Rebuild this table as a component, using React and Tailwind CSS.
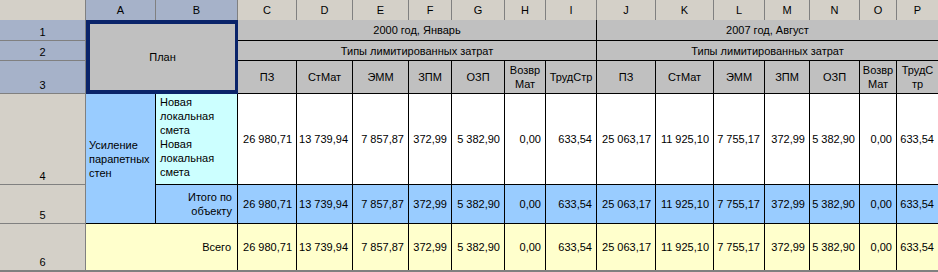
import * as React from "react";

const letters = ["A", "B", "C", "D", "E", "F", "G", "H", "I", "J", "K", "L", "M", "N", "O", "P"];

const kinds = ["ПЗ", "СтМат", "ЭММ", "ЗПМ", "ОЗП", "Возвр Мат", "ТрудСтр"];

const values = [
  "26 980,71",
  "13 739,94",
  "7 857,87",
  "372,99",
  "5 382,90",
  "0,00",
  "633,54",
  "25 063,17",
  "11 925,10",
  "7 755,17",
  "372,99",
  "5 382,90",
  "0,00",
  "633,54",
];

function RowHead({ n, selected, last }) {
  return (
    <div
      className={
        "flex items-end justify-center border-r border-[#808080] pb-[1px] " +
        (last ? "" : "border-b ") +
        (selected ? "bg-[#a6b2c9]" : "bg-[#d4d0c8]")
      }
    >
      {n}
    </div>
  );
}

function NumberRow({ bg, last }) {
  return values.map((v, i) => (
    <div
      key={i}
      className={
        "flex items-center justify-end whitespace-nowrap border-black pr-[4px] " +
        (i === 13 ? "pr-[3px] " : "border-r ") +
        (last ? "" : "border-b ") +
        bg
      }
    >
      {v}
    </div>
  ));
}

export default function App() {
  return (
    <div className="w-[938px] h-[272px] overflow-hidden bg-white font-['Liberation_Sans',Arial,sans-serif] text-[11px] leading-[14px] text-black">
      <div className="grid grid-cols-[86px_70px_82px_59px_56px_56px_43px_53px_41px_51px_59px_58px_51px_45px_50px_37px_41px] grid-rows-[20px_21px_20px_33px_91px_39px_46px] border-b-2 border-[#808080]">
        {/* column letters */}
        <div className="bg-[#d4d0c8] border-r border-[#808080]" />
        {letters.map((l, i) => (
          <div
            key={l}
            className={
              "flex items-center justify-center border-[#808080] " +
              (i === 15 ? "" : "border-r ") +
              (i < 2 ? "bg-[#a6b2c9]" : "bg-[#d4d0c8]")
            }
          >
            {l}
          </div>
        ))}

        {/* row 1 */}
        <RowHead n="1" selected />
        <div className="col-span-2 row-span-3 flex items-center justify-center bg-[#c0c0c0] border-4 border-r-[3px] border-[#0a246a]">
          План
        </div>
        <div className="col-span-7 flex items-center justify-center bg-[#c0c0c0] border-r border-b border-black">
          2000 год, Январь
        </div>
        <div className="col-span-7 flex items-center justify-center bg-[#c0c0c0] border-b border-black">
          2007 год, Август
        </div>

        {/* row 2 */}
        <RowHead n="2" selected />
        <div className="col-span-7 flex items-center justify-center bg-[#c0c0c0] border-r border-b border-black">
          Типы лимитированных затрат
        </div>
        <div className="col-span-7 flex items-center justify-center bg-[#c0c0c0] border-b border-black">
          Типы лимитированных затрат
        </div>

        {/* row 3 */}
        <RowHead n="3" selected />
        {[...kinds, ...kinds].map((k, i) => (
          <div
            key={i}
            className={
              "flex items-center justify-center text-center bg-[#c0c0c0] border-b border-black px-[1px] " +
              (i === 13 ? "" : "border-r")
            }
          >
            {i === 13 ? (
              <span>
                ТрудС
                <br />
                тр
              </span>
            ) : (
              k
            )}
          </div>
        ))}

        {/* row 4 */}
        <RowHead n="4" />
        <div className="row-span-2 flex items-center bg-[#99ccff] border-r border-b border-black pl-[3px] pr-[1px]">
          Усиление парапетных стен
        </div>
        <div className="bg-[#ccffff] border-r border-b border-black pl-[4px] pt-[1px]">
          Новая локальная смета
          <br />
          Новая локальная смета
        </div>
        <NumberRow bg="bg-white" />

        {/* row 5 */}
        <RowHead n="5" />
        <div className="flex items-center justify-end text-right bg-[#99ccff] border-r border-b border-black pr-[5px] pl-[20px]">
          Итого по объекту
        </div>
        <NumberRow bg="bg-[#99ccff]" />

        {/* row 6 */}
        <RowHead n="6" last />
        <div className="col-span-2 flex items-center justify-end bg-[#ffffcc] border-r border-black pr-[6px]">
          Всего
        </div>
        <NumberRow bg="bg-[#ffffcc]" last />
      </div>
    </div>
  );
}
